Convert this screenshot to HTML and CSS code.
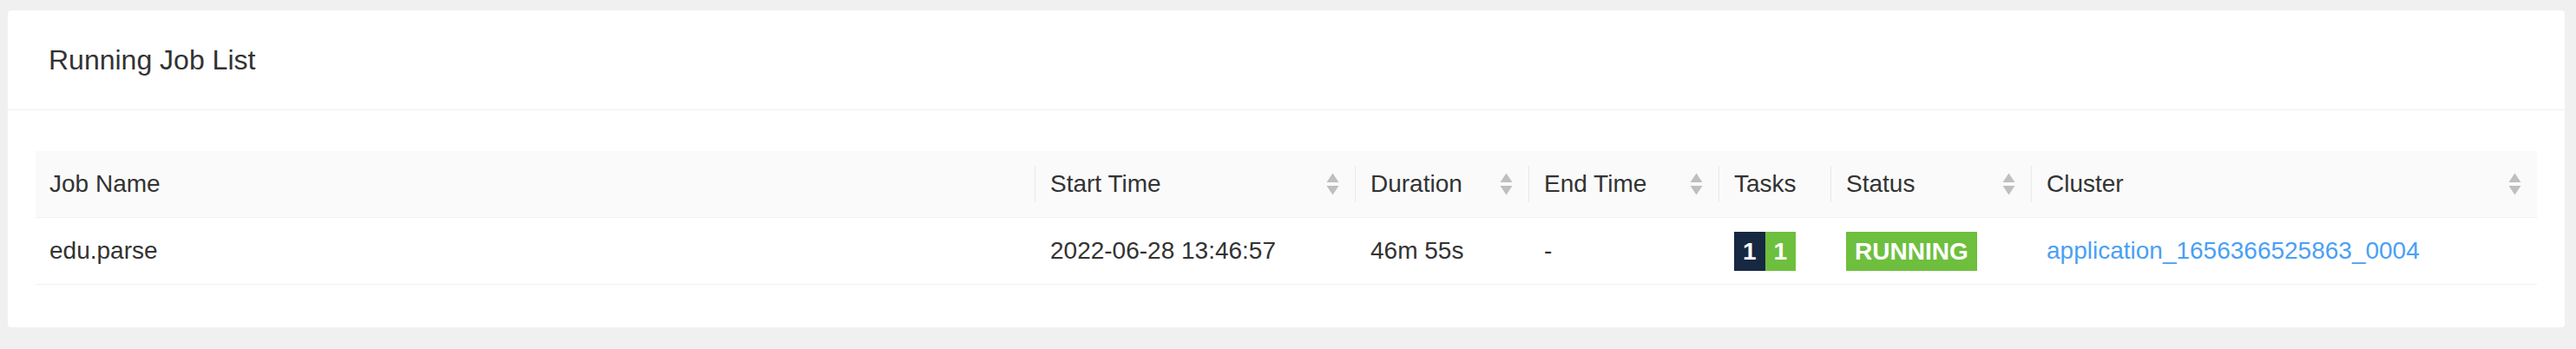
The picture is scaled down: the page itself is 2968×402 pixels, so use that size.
FILE: index.html
```html
<!DOCTYPE html>
<html lang="en">
<head>
<meta charset="utf-8">
<title>Running Job List</title>
<link rel="stylesheet" href="styles.css">
</head>
<body>
<div class="card">
  <div class="card-head">Running Job List</div>
  <div class="card-body">
    <table class="jobs">
      <colgroup>
        <col class="c-name"><col class="c-start"><col class="c-dur"><col class="c-end"><col class="c-tasks"><col class="c-status"><col class="c-cluster">
      </colgroup>
      <thead>
        <tr>
          <th class="first"><div class="th-in"><span>Job Name</span></div></th>
          <th><div class="th-in"><span>Start Time</span><svg class="sorter" viewBox="0 0 15 26" width="15" height="26"><path d="M7.5 0.5 L14.5 11 L0.5 11 Z"/><path d="M0.5 15 L14.5 15 L7.5 25.5 Z"/></svg></div></th>
          <th><div class="th-in"><span>Duration</span><svg class="sorter" viewBox="0 0 15 26" width="15" height="26"><path d="M7.5 0.5 L14.5 11 L0.5 11 Z"/><path d="M0.5 15 L14.5 15 L7.5 25.5 Z"/></svg></div></th>
          <th><div class="th-in"><span>End Time</span><svg class="sorter" viewBox="0 0 15 26" width="15" height="26"><path d="M7.5 0.5 L14.5 11 L0.5 11 Z"/><path d="M0.5 15 L14.5 15 L7.5 25.5 Z"/></svg></div></th>
          <th><div class="th-in"><span>Tasks</span></div></th>
          <th><div class="th-in"><span>Status</span><svg class="sorter" viewBox="0 0 15 26" width="15" height="26"><path d="M7.5 0.5 L14.5 11 L0.5 11 Z"/><path d="M0.5 15 L14.5 15 L7.5 25.5 Z"/></svg></div></th>
          <th><div class="th-in"><span>Cluster</span><svg class="sorter" viewBox="0 0 15 26" width="15" height="26"><path d="M7.5 0.5 L14.5 11 L0.5 11 Z"/><path d="M0.5 15 L14.5 15 L7.5 25.5 Z"/></svg></div></th>
        </tr>
      </thead>
      <tbody>
        <tr>
          <td class="first">edu.parse</td>
          <td>2022-06-28 13:46:57</td>
          <td>46m 55s</td>
          <td>-</td>
          <td><span class="tasks"><span class="t-dark">1</span><span class="t-green">1</span></span></td>
          <td><span class="status">RUNNING</span></td>
          <td><a class="link" href="#">application_1656366525863_0004</a></td>
        </tr>
      </tbody>
    </table>
  </div>
</div>
</body>
</html>
```

FILE: styles.css
```css
html, body {
  margin: 0;
  background: #f0f0f0;
}
body {
  padding: 12px 13px 25px 9px;
  font-family: "Liberation Sans", Arial, sans-serif;
  color: #333;
}
.card {
  background: #fff;
  border-radius: 4px;
}
.card-head {
  height: 114px;
  display: flex;
  align-items: center;
  padding: 0 47px;
  font-size: 32px;
  color: #333;
  border-bottom: 1px solid #f0f0f0;
}
.card-body {
  padding: 47px 32px 49px 32px;
}
.jobs {
  width: 100%;
  table-layout: fixed;
  border-collapse: collapse;
  font-size: 28px;
}
.c-name { width: 1151px; }
.c-start { width: 369px; }
.c-dur { width: 200px; }
.c-end { width: 219px; }
.c-tasks { width: 129px; }
.c-status { width: 231px; }
.c-cluster { width: 583px; }

.jobs th {
  position: relative;
  height: 76px;
  padding: 0 18px;
  background: #fafafa;
  border-bottom: 1px solid #f0f0f0;
  font-weight: normal;
  text-align: left;
  color: #333;
}
.jobs th + th::before {
  content: "";
  position: absolute;
  left: 0;
  top: 50%;
  width: 1px;
  height: 42px;
  transform: translateY(-50%);
  background: #e9e9e9;
}
.th-in {
  display: flex;
  align-items: center;
  justify-content: space-between;
}
.sorter {
  fill: #bfbfbf;
  flex: none;
}
.jobs td {
  height: 76px;
  padding: 0 18px;
  border-bottom: 1px solid #f0f0f0;
  color: #333;
  white-space: nowrap;
}
.jobs .first {
  padding-left: 16px;
}
.tasks {
  display: inline-flex;
  vertical-align: middle;
}
.tasks span,
.status {
  display: inline-block;
  height: 45px;
  line-height: 45px;
  padding: 0 10px;
  color: #fff;
  font-weight: bold;
}
.t-dark { background: #162842; }
.t-green { background: #6ebf3e; }
.status {
  background: #6ebf3e;
  vertical-align: middle;
}
.link {
  color: #4a9ff5;
  text-decoration: none;
}
```
